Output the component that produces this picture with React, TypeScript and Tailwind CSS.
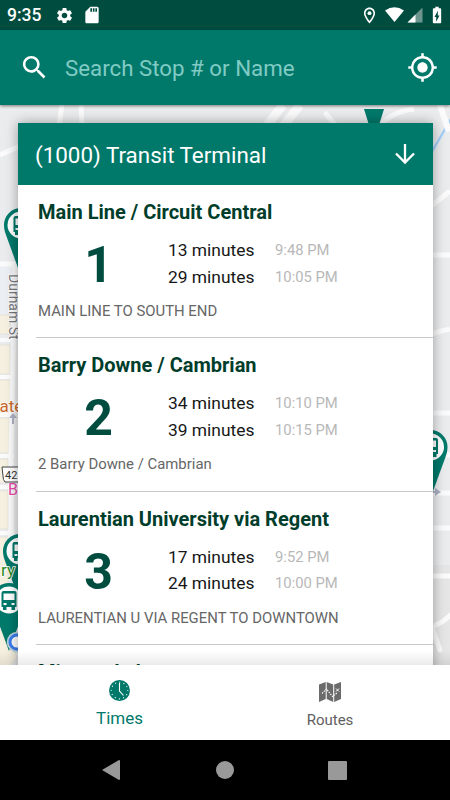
import {
	MdBatteryChargingFull,
	MdGpsFixed,
	MdOutlineLocationOn,
	MdSdCard,
	MdSearch,
	MdSettings,
} from "react-icons/md";

const routes = [
	{
		name: "Main Line / Circuit Central",
		number: "1",
		times: [
			{ wait: "13 minutes", at: "9:48 PM" },
			{ wait: "29 minutes", at: "10:05 PM" },
		],
		direction: "MAIN LINE TO SOUTH END",
	},
	{
		name: "Barry Downe / Cambrian",
		number: "2",
		times: [
			{ wait: "34 minutes", at: "10:10 PM" },
			{ wait: "39 minutes", at: "10:15 PM" },
		],
		direction: "2 Barry Downe / Cambrian",
	},
	{
		name: "Laurentian University via Regent",
		number: "3",
		times: [
			{ wait: "17 minutes", at: "9:52 PM" },
			{ wait: "24 minutes", at: "10:00 PM" },
		],
		direction: "LAURENTIAN U VIA REGENT TO DOWNTOWN",
	},
];

const BusPin = ({ x, y }: { x: number; y: number }) => (
	<g transform={`translate(${x} ${y})`}>
		<path d="M-17 0a17 17 0 0 1 34 0c0 4-1 7-2 10L0 51-15 10c-1-3-2-6-2-10Z" fill="#00796b" />
		<circle r="13.5" fill="#fff" />
		<path
			fillRule="evenodd"
			d="M-5.500-9H5.500q2 0 2 2V7H6v3H2.500V7h-5v3H-6V7h-1.500V-7q0-2 2-2ZM-5.500-6.500V0h11v-6.500ZM-5.500 3v2h3V3Zm8 0v2h3V3Z"
			fill="#00796b"
		/>
	</g>
);

const StreetMap = () => (
	<svg className="absolute inset-0" width="450" height="560" viewBox="0 105 450 560">
		<rect y="105" width="450" height="560" fill="#ebecee" />
		<path d="M430 565h20v100h-20Z" fill="#e6e6e6" />
		<path d="M0 267h12v47H0Z" fill="#eceff3" />
		<g fill="#f5f0df" stroke="#e2e0d8" strokeWidth=".7">
			<path d="M-1 315h11v19H-1ZM-1 345h11v29H-1ZM-1 380h11v31H-1ZM-1 418h10v35H-1ZM-1 459h9v24H-1ZM-1 491h9v38H-1ZM-1 537h9v90H-1Z" />
			<path d="M-1 630 8 633 17 658 8 668H-1Z" />
		</g>
		<g fill="none" stroke="#fbfbfb" strokeWidth="5">
			<path d="M0 155 20 146M62 105l-3 20M81 105l1 20M0 264h20M15 264l-4 190V570" />
			<path d="M0 340h14M0 377h14M0 415h14M0 456h14M0 487h14M0 533h14" strokeWidth="4" />
			<path d="m283 105-20 25M300 105l-20 25" strokeWidth="9" />
			<path d="m326 114 13 15" strokeLinecap="round" />
			<path d="M378 127q15-16 36-18" />
			<path d="m430 207 20-16M430 255h20M430 334l20-5M430 413h20M430 455h20M430 493h20M430 528h20M430 576h20" />
			<path d="m430 628 12-6 10-8M433 630l7 20" strokeLinecap="round" />
			<path d="m430 155 25-43" stroke="#a6d0f8" strokeWidth="2.300" />
			<path d="m440 105 8 24" strokeLinecap="round" strokeWidth="6" />
		</g>
		<path d="m441 492-6-4v3h-4v2h4v3ZM13 413l-4 5h3v6h2v-6h3Z" fill="#aeb1c4" />
		<path d="M364 109h20l-5 16h-10Z" fill="#00796b" />
		<BusPin x={21} y={225} />
		<BusPin x={430.500} y={447} />
		<BusPin x={20} y={551} />
		<g fontFamily="Roboto, sans-serif" stroke="#fff" strokeWidth="1.500" paintOrder="stroke">
			<text transform="translate(9 274) rotate(90)" fontSize="14" fill="#77797e">
				Durham St
			</text>
			<text x="-.5" y="412" fontSize="17" fill="#c9672b">
				ate
			</text>
			<text x="8" y="495" fontSize="16" fill="#e648a8">
				B
			</text>
			<text x="1" y="576" fontSize="17" fill="#2d8a2a">
				ry
			</text>
		</g>
		<path d="M2 467h22v15H5q-2-2-2-6Z" fill="#fff" stroke="#444" />
		<text x="5" y="479" fontFamily="Roboto, sans-serif" fontSize="11" fill="#333">
			42
		</text>
		<BusPin x={9} y={600} />
		<circle cx="17" cy="642" r="7" fill="none" stroke="#b9d3dc" strokeWidth="6.500" />
		<circle cx="17" cy="642" r="7" fill="#fff" stroke="#3b7ded" strokeWidth="3" />
	</svg>
);

const StatusBar = () => (
	<div className="flex h-[30px] shrink-0 items-center bg-[#004d40] pl-[7px] pr-[3px] text-white">
		<span className="w-[48px] text-[17.500px] font-medium leading-[30px]">9:35</span>
		<MdSettings className="size-[19px]" />
		<MdSdCard className="ml-[8px] size-[20px]" />
		<div className="ml-auto flex items-center">
			<MdOutlineLocationOn className="mr-[6px] size-[19px]" />
			<svg width="38" height="16" viewBox="0 0 38 16">
				<path d="M0 3.500Q9.500-3 19 3.500L9.500 15Z" fill="#fff" />
				<path d="M22.500 15.500 37.500.500v15Z" fill="#6b958d" />
				<path d="m22.500 15.500 8-8v8Z" fill="#fff" />
			</svg>
			<MdBatteryChargingFull className="ml-[4px] size-[20px]" />
		</div>
	</div>
);

const ClockIcon = () => (
	<svg width="21" height="21" viewBox="0 0 21 21">
		<circle cx="10.500" cy="10.500" r="10.500" fill="#00796b" />
		<circle
			cx="10.500"
			cy="10.500"
			r="8.300"
			fill="none"
			stroke="#fff"
			strokeWidth="1.200"
			strokeDasharray="1 3.346"
			strokeDashoffset=".5"
		/>
		<path d="M10.500 3v8l4 4.500" fill="none" stroke="#fff" strokeWidth="1.100" />
	</svg>
);

const MapIcon = () => (
	<svg width="22" height="20" viewBox="0 0 22 20">
		<path d="M0 2.500 6.700 0v17L0 20ZM7.700 0l6.500 2.500V20l-6.500-3ZM15.200 2.500 22 0v17l-6.800 3Z" fill="#6b6b6b" />
		<path
			d="m3 11.500 4.500-4.500 6 7.500 5-4"
			fill="none"
			stroke="#fff"
			strokeWidth="1.100"
			strokeDasharray="1.500 1"
		/>
		<path d="m17 6.500 3 3m0-3-3 3" stroke="#fff" strokeWidth="1" />
	</svg>
);

const App = () => {
	return (
		<div className="flex h-[800px] w-[450px] flex-col overflow-hidden bg-black font-[Roboto,sans-serif]">
			<StatusBar />
			<header className="relative z-10 flex h-[75px] shrink-0 items-center bg-[#00796b] pl-[19px] pr-[12px] text-white shadow-[0_1px_3px_rgba(0,0,0,0.5)]">
				<MdSearch className="size-[31px]" />
				<span className="ml-[15px] mt-[2px] text-[22.300px] text-[#80cbc4]">Search Stop # or Name</span>
				<MdGpsFixed className="ml-auto size-[31px]" />
			</header>

			<main className="relative h-[560px] shrink-0 overflow-hidden">
				<StreetMap />
				<section className="relative ml-[18px] mt-[18px] w-[415px] bg-white shadow-[0_0_12px_rgba(0,0,0,0.35)]">
					<div className="flex h-[62px] items-center justify-between bg-[#00796b] px-[17px] text-white">
						<h1 className="mt-[3px] text-[22.400px]">(1000) Transit Terminal</h1>
						<svg width="22" height="22" viewBox="0 0 22 22" fill="none" stroke="#fff" strokeWidth="2.300">
							<path d="M11 1v18.500M2 10.500l9 9 9-9" />
						</svg>
					</div>
					{routes.map((route) => (
						<article key={route.number} className="relative h-[153.300px] pl-[20px]">
							<h2 className="pt-[13px] text-[20px] font-bold leading-[28px] text-[#003d2b]">
								{route.name}
							</h2>
							<div className="mt-[11px] flex h-[53px]">
								<div className="w-[121px] text-center text-[50px] font-bold leading-[56px] text-[#004d40]">
									{route.number}
								</div>
								<div className="ml-[9px] leading-[26.500px]">
									{route.times.map((time) => (
										<div key={time.at} className="flex">
											<span className="w-[107px] text-[17.400px] text-[#171717]">{time.wait}</span>
											<span className="text-[14.800px] text-[#b8b8b8]">{time.at}</span>
										</div>
									))}
								</div>
							</div>
							<p className="mt-[11px] text-[14.900px] leading-[20px] text-[#666]">{route.direction}</p>
							<div className="absolute bottom-0 left-[18px] right-0 h-px bg-[#c8c8c8]" />
						</article>
					))}
					<h2 className="h-[153px] pl-[20px] pt-[13px] text-[20px] font-bold leading-[28px] text-[#003d2b]">
						Minnow Lake
					</h2>
				</section>
				<div className="absolute inset-x-0 bottom-0 h-[14px] bg-gradient-to-b from-transparent to-black/8" />
			</main>

			<nav className="grid h-[75px] shrink-0 grid-cols-2 bg-white">
				<div className="flex flex-col items-center pl-[14px] pt-[15px] text-[17px] leading-[20px] text-[#00796b]">
					<ClockIcon />
					<span className="mt-[7px]">Times</span>
				</div>
				<div className="flex flex-col items-center pr-[15px] pt-[17px] text-[15px] leading-[20px] text-[#606060]">
					<MapIcon />
					<span className="mt-[8px]">Routes</span>
				</div>
			</nav>

			<div className="flex h-[60px] shrink-0 items-center bg-black pl-[102px] text-[#999]">
				<svg width="18" height="20" viewBox="0 0 18 20">
					<path d="M0 10 17 0q1 0 1 1v18q0 1-1 1Z" fill="currentColor" />
				</svg>
				<div className="ml-[96px] size-[18px] rounded-full bg-[#999]" />
				<div className="ml-[94px] size-[19px] rounded-[1px] bg-[#999]" />
			</div>
		</div>
	);
};

export default App;
